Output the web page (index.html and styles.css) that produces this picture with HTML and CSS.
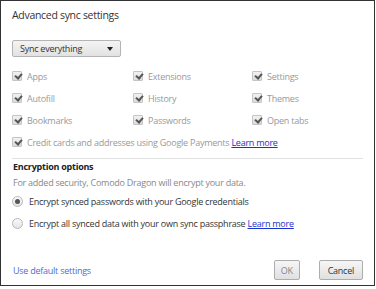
FILE: index.html
```html
<!DOCTYPE html>
<html lang="en">
<head>
  <meta charset="UTF-8">
  <title>Advanced sync settings</title>
  <link rel="stylesheet" href="styles.css">
</head>
<body>
  <div class="sync-dialog">
    <h1 class="dialog-title">Advanced sync settings</h1>

    <div class="sync-select">
      <span>Sync everything</span>
      <span class="select-arrow"></span>
    </div>

    <div class="data-types">
      <label class="check-item"><span class="check-box"></span>Apps</label>
      <label class="check-item"><span class="check-box"></span>Extensions</label>
      <label class="check-item"><span class="check-box"></span>Settings</label>
      <label class="check-item"><span class="check-box"></span>Autofill</label>
      <label class="check-item"><span class="check-box"></span>History</label>
      <label class="check-item"><span class="check-box"></span>Themes</label>
      <label class="check-item"><span class="check-box"></span>Bookmarks</label>
      <label class="check-item"><span class="check-box"></span>Passwords</label>
      <label class="check-item"><span class="check-box"></span>Open tabs</label>
      <label class="check-item wide"><span class="check-box"></span>Credit cards and addresses using Google Payments&nbsp;<a href="#" class="learn-link">Learn more</a></label>
    </div>

    <div class="separator"></div>

    <h2 class="section-title">Encryption options</h2>
    <p class="section-note">For added security, Comodo Dragon will encrypt your data.</p>

    <label class="radio-item first"><span class="radio-dot checked"></span>Encrypt synced passwords with your Google credentials</label>
    <label class="radio-item"><span class="radio-dot"></span>Encrypt all synced data with your own sync passphrase&nbsp;<a href="#" class="learn-link">Learn more</a></label>

    <div class="dialog-footer">
      <a href="#" class="default-link">Use default settings</a>
      <div class="button-row">
        <button class="dialog-button ok-button">OK</button>
        <button class="dialog-button">Cancel</button>
      </div>
    </div>
  </div>
</body>
</html>
```

FILE: styles.css
```css
body {
  margin: 0;
  background-color: #ffffff;
  font-family: 'Open Sans', 'DejaVu Sans', sans-serif;
  font-size: 9px;
  letter-spacing: -0.25px;
}
.sync-dialog {
  box-sizing: border-box;
  width: 375px;
  height: 286px;
  border: 1px solid #333;
  box-shadow: 0 1px 0 #c8c8c8;
  padding: 0 11px 0 11px;
  display: flex;
  flex-direction: column;
  color: #333;
}
.dialog-title {
  margin: 6px 0 0 0;
  font-size: 10.5px;
  font-weight: normal;
  letter-spacing: -0.3px;
  line-height: 16px;
  color: #333;
}
.sync-select {
  box-sizing: border-box;
  margin-top: 17px;
  width: 109px;
  height: 17px;
  padding: 0 7px;
  border: 1px solid #b4b4b4;
  border-radius: 2px;
  background: linear-gradient(#f4f4f4, #e2e2e2);
  display: flex;
  align-items: center;
  justify-content: space-between;
  color: #333;
  line-height: 15px;
}
.select-arrow {
  width: 0;
  height: 0;
  border-left: 3.5px solid transparent;
  border-right: 3.5px solid transparent;
  border-top: 4px solid #222;
}
.data-types {
  margin-top: 8px;
  display: grid;
  grid-template-columns: 121px 119px 1fr;
  grid-auto-rows: 22px;
}
.check-item {
  display: flex;
  align-items: center;
  color: #999;
  white-space: nowrap;
}
.check-item.wide {
  grid-column: 1 / 4;
}
.check-box {
  box-sizing: border-box;
  width: 10px;
  height: 10px;
  margin: 0 5px 0 0;
  border: 1px solid #c4c4c4;
  border-radius: 1px;
  background: linear-gradient(#f2f2f2, #dcdcdc);
  position: relative;
}
.check-box::after {
  content: '';
  position: absolute;
  left: 2.5px;
  top: 0;
  width: 3px;
  height: 5px;
  border-right: 2px solid #555;
  border-bottom: 2px solid #555;
  transform: rotate(40deg);
}
.learn-link {
  color: #1a33cc;
  text-decoration: underline;
}
.separator {
  margin-top: 5px;
  height: 1px;
  background-color: #e2e2e2;
}
.section-title {
  margin: 0 0 0 1px;
  font-size: 9px;
  font-weight: bold;
  line-height: 16px;
  color: #222;
}
.section-note {
  margin: 0 0 0 1px;
  line-height: 16px;
  color: #888;
}
.radio-item {
  display: flex;
  align-items: center;
  height: 22px;
  color: #333;
  white-space: nowrap;
}
.radio-item.first {
  margin-top: -1px;
}
.radio-dot {
  box-sizing: border-box;
  width: 11px;
  height: 11px;
  margin: 0 6px 0 0;
  border: 1px solid #b8b8b8;
  border-radius: 50%;
  background: linear-gradient(#fafafa, #e4e4e4);
  display: flex;
  align-items: center;
  justify-content: center;
}
.radio-dot.checked::after {
  content: '';
  width: 5px;
  height: 5px;
  border-radius: 50%;
  background-color: #555;
}
.dialog-footer {
  margin-top: auto;
  margin-bottom: 5px;
  display: flex;
  align-items: center;
  justify-content: space-between;
}
.default-link {
  margin-left: 1px;
  color: #4f6bd0;
  text-decoration: none;
}
.button-row {
  display: flex;
  gap: 19px;
}
.dialog-button {
  box-sizing: border-box;
  height: 20px;
  padding: 0 8px;
  border: 1px solid #adadad;
  border-radius: 2px;
  background: linear-gradient(#f6f6f6, #e0e0e0);
  font-family: inherit;
  font-size: 9px;
  letter-spacing: inherit;
  color: #333;
}
.ok-button {
  width: 26px;
  padding: 0;
  color: #888;
}
```
